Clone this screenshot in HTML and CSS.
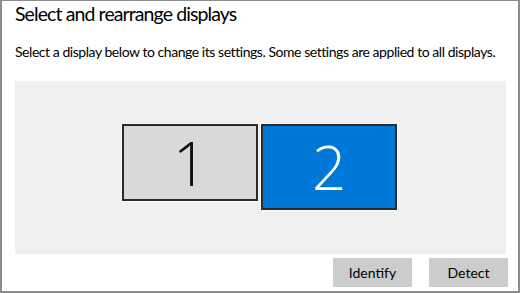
FILE: index.html
```
<!DOCTYPE html>
<html lang="en">
<head>
  <meta charset="UTF-8" />
  <title>Select and rearrange displays</title>
  <link rel="stylesheet" href="styles.css">
</head>
<body>
  <div class="panel">
    <h1>Select and rearrange displays</h1>
    <p class="hint">Select a display below to change its settings. Some settings are applied to all displays.</p>
    <div class="arrange">
      <div class="monitor small">1</div>
      <div class="monitor active">2</div>
    </div>
    <div class="actions">
      <button type="button">Identify</button>
      <button type="button">Detect</button>
    </div>
  </div>
</body>
</html>
```

FILE: styles.css
```
body {
  margin: 0;
  background: white;
  font-family: Lato, "Noto Sans", sans-serif;
}
.panel {
  box-sizing: border-box;
  width: 520px;
  height: 293px;
  border: 2px solid #8c8c8c;
  border-top-width: 1px;
  padding: 0 10px 0 13px;
}
.panel h1 {
  margin: 0;
  font-size: 19.5px;
  font-weight: normal;
  letter-spacing: -0.9px;
  line-height: 25px;
  color: #000;
  white-space: nowrap;
}
.hint {
  margin: 16px 0 0 0;
  font-size: 14px;
  letter-spacing: -0.45px;
  line-height: 20px;
  color: #000;
  white-space: nowrap;
}
.arrange {
  margin: 19px 2px 0 0;
  height: 173px;
  background: #f0f0f0;
  display: flex;
  justify-content: center;
  align-items: flex-start;
  gap: 3px;
  padding: 43px 2px 0 0;
  box-sizing: border-box;
}
.monitor {
  box-sizing: border-box;
  width: 136px;
  height: 86px;
  border: 2px solid #2b2b2b;
  box-shadow: 0 0 0 1px #fafafa;
  background: #d9d9d9;
  color: #111;
  font-family: "Open Sans", sans-serif;
  font-weight: 300;
  font-size: 60px;
  display: flex;
  justify-content: center;
  align-items: center;
}
.monitor.small {
  height: 77px;
}
.monitor.active {
  background: #0078d7;
  color: white;
}
.actions {
  margin-top: 4px;
  display: flex;
  justify-content: flex-end;
  gap: 17px;
}
.actions button {
  width: 79px;
  height: 29px;
  border: none;
  background: #cccccc;
  font-family: Lato, "Noto Sans", sans-serif;
  font-size: 14px;
  color: #000;
  padding: 0;
}
```
